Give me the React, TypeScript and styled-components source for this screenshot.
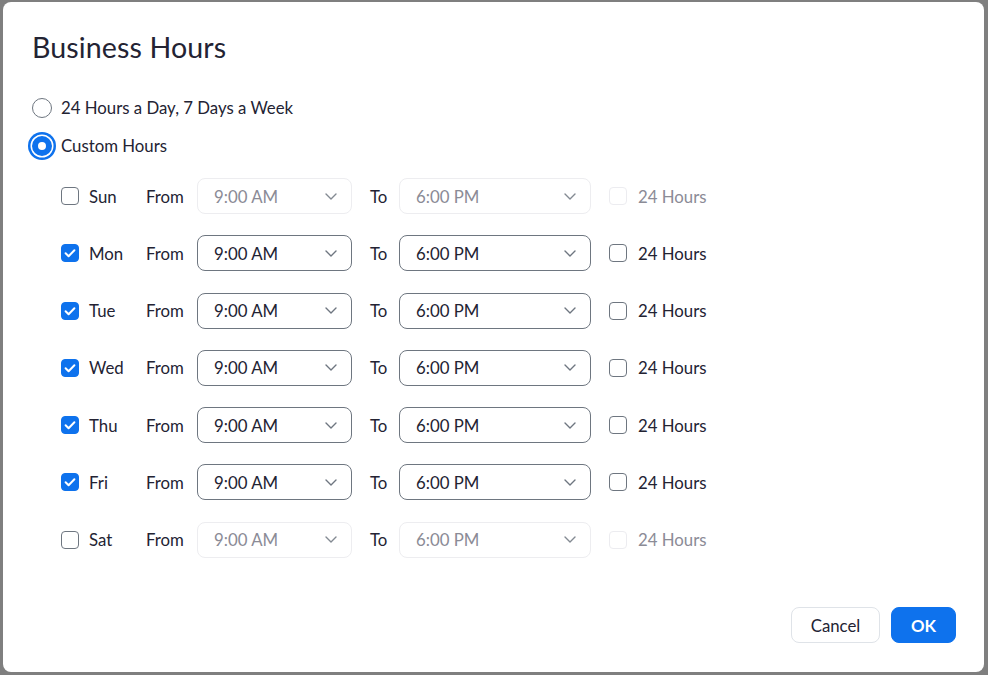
import styled, { createGlobalStyle } from 'styled-components';

const GlobalStyle = createGlobalStyle`
  html, body {
    margin: 0;
    padding: 0;
    background: #7f7f7f;
  }
  * {
    box-sizing: border-box;
  }
  body {
    font-family: Lato, 'Open Sans', sans-serif;
    color: #232333;
  }
`;

type Day = { name: string; on: boolean };

const DAYS: Day[] = [
  { name: 'Sun', on: false },
  { name: 'Mon', on: true },
  { name: 'Tue', on: true },
  { name: 'Wed', on: true },
  { name: 'Thu', on: true },
  { name: 'Fri', on: true },
  { name: 'Sat', on: false },
];

// Icons
const Chevron = () => (
  <svg width="12" height="7" viewBox="0 0 12 7" fill="none">
    <path d="M1 1l5 5 5-5" stroke="#6e7680" strokeWidth="1.4" strokeLinecap="round" strokeLinejoin="round" />
  </svg>
);

const Check = () => (
  <svg width="12" height="10" viewBox="0 0 12 10" fill="none">
    <path d="M1.6 5.2l3 3 5.8-6" stroke="#fff" strokeWidth="2" strokeLinecap="round" strokeLinejoin="round" />
  </svg>
);

export default function App() {
  return (
    <Page>
      <GlobalStyle />
      <Modal>
        <Title>Business Hours</Title>

        <RadioGroup>
          <RadioRow>
            <RadioMark />
            <span>24 Hours a Day, 7 Days a Week</span>
          </RadioRow>
          <RadioRow>
            <RadioMark $checked />
            <span>Custom Hours</span>
          </RadioRow>
        </RadioGroup>

        <DayList>
          {DAYS.map((day) => (
            <DayRow key={day.name}>
              <CheckBox $checked={day.on}>{day.on && <Check />}</CheckBox>
              <DayLabel>{day.name}</DayLabel>
              <FieldLabel $width={51}>From</FieldLabel>
              <Select $width={155} $disabled={!day.on}>
                <span>9:00 AM</span>
                <Chevron />
              </Select>
              <FieldLabel $width={29} $gap={18}>To</FieldLabel>
              <Select $width={192} $disabled={!day.on}>
                <span>6:00 PM</span>
                <Chevron />
              </Select>
              <AllDay $disabled={!day.on}>
                <CheckBox $disabled={!day.on} />
                <span>24 Hours</span>
              </AllDay>
            </DayRow>
          ))}
        </DayList>

        <Footer>
          <Button $width={89}>Cancel</Button>
          <Button $width={65} $primary>OK</Button>
        </Footer>
      </Modal>
    </Page>
  );
}

const Page = styled.div`
  width: 988px;
  height: 675px;
  padding: 2px 4px 3px 3px;
`;

const Modal = styled.div`
  display: flex;
  flex-direction: column;
  height: 100%;
  background: #fff;
  border-radius: 8px;
  padding: 28px 28px 29px 29px;
`;

const Title = styled.h1`
  margin: 0;
  font-size: 28.6px;
  line-height: 34px;
  font-weight: 400;
  letter-spacing: 0.1px;
  color: #232333;
`;

const RadioGroup = styled.div`
  display: flex;
  flex-direction: column;
  gap: 18px;
  margin-top: 34px;
`;

const RadioRow = styled.label`
  display: flex;
  align-items: center;
  gap: 9px;
  height: 20px;
  font-size: 16.8px;
  line-height: 20px;
`;

const RadioMark = styled.span<{ $checked?: boolean }>`
  width: 20px;
  height: 20px;
  border-radius: 50%;
  flex-shrink: 0;
  background: #fff;
  border: ${({ $checked }) => ($checked ? '6px solid #0e72ed' : '1px solid #6e7680')};
  box-shadow: ${({ $checked }) => ($checked ? '0 0 0 1.5px #fff, 0 0 0 4px #0e72ed' : 'none')};
`;

const DayList = styled.div`
  display: flex;
  flex-direction: column;
  gap: 21.3px;
  margin-top: 22px;
  padding-left: 29px;
`;

const DayRow = styled.div`
  display: flex;
  align-items: center;
  height: 36px;
  font-size: 16.8px;
`;

const CheckBox = styled.span<{ $checked?: boolean; $disabled?: boolean }>`
  display: flex;
  align-items: center;
  justify-content: center;
  width: 18px;
  height: 18px;
  flex-shrink: 0;
  border-radius: 4px;
  background: ${({ $checked }) => ($checked ? '#0e72ed' : '#fff')};
  border: 1px solid
    ${({ $checked, $disabled }) => ($checked ? '#0e72ed' : $disabled ? '#ececf0' : '#6e7680')};
`;

const DayLabel = styled.span`
  width: 57px;
  margin-left: 10px;
`;

const FieldLabel = styled.span<{ $width: number; $gap?: number }>`
  width: ${({ $width }) => $width}px;
  margin-left: ${({ $gap }) => $gap ?? 0}px;
`;

const Select = styled.div<{ $width: number; $disabled?: boolean }>`
  display: flex;
  align-items: center;
  justify-content: space-between;
  width: ${({ $width }) => $width}px;
  height: 36px;
  padding: 0 14px 0 16px;
  border-radius: 8px;
  border: 1px solid ${({ $disabled }) => ($disabled ? '#ededf0' : '#6e7680')};
  color: ${({ $disabled }) => ($disabled ? '#8b8b96' : '#232333')};
  & > svg {
    opacity: ${({ $disabled }) => ($disabled ? 0.85 : 1)};
  }
`;

const AllDay = styled.label<{ $disabled?: boolean }>`
  display: flex;
  align-items: center;
  gap: 11px;
  margin-left: 18px;
  color: ${({ $disabled }) => ($disabled ? '#8b8b96' : '#232333')};
`;

const Footer = styled.div`
  display: flex;
  justify-content: flex-end;
  gap: 11px;
  margin-top: auto;
`;

const Button = styled.button<{ $primary?: boolean; $width: number }>`
  width: ${({ $width }) => $width}px;
  height: 36px;
  padding: 0;
  border-radius: 8px;
  font-family: Lato, 'Open Sans', sans-serif;
  font-size: 16.8px;
  font-weight: ${({ $primary }) => ($primary ? 700 : 400)};
  color: ${({ $primary }) => ($primary ? '#fff' : '#232333')};
  background: ${({ $primary }) => ($primary ? '#0e72ed' : '#fff')};
  border: 1px solid ${({ $primary }) => ($primary ? '#0e72ed' : '#dfe3e8')};
  cursor: pointer;
`;
